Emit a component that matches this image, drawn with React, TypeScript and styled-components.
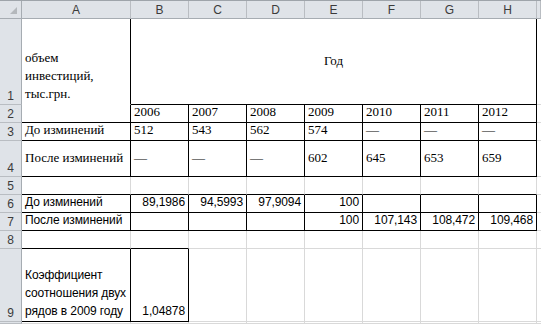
import React from 'react';
import styled, { createGlobalStyle } from 'styled-components';

const K = '#000000'
const G = '#d9d9d9'
const N = '#ffffff'

type CellData = {
  text?: string
  r: string
  b: string
  span?: number
  align?: 'left' | 'right' | 'center'
  valign?: 'end' | 'center'
  font?: 'serif' | 'sans'
}

const COLS = ['A', 'B', 'C', 'D', 'E', 'F', 'G', 'H', '']
const YEARS = ['2006', '2007', '2008', '2009', '2010', '2011', '2012']

const blank = (r: string, b: string, n = 1): CellData[] => Array.from({ length: n }, () => ({ r, b }))

const serif = (text: string, valign: 'end' | 'center' = 'end'): CellData => ({ text, r: K, b: K, font: 'serif', valign })
const num = (text: string): CellData => ({ text, r: K, b: K, font: 'sans', align: 'right' })

const ROWS: CellData[][] = [
  [
    { text: 'объем\nинвестиций,\nтыс.грн.', r: K, b: N, font: 'serif' },
    { text: 'Год', r: K, b: K, span: 7, font: 'serif', align: 'center', valign: 'center' },
    { r: G, b: G },
  ],
  [{ r: K, b: K }, ...YEARS.map(y => serif(y)), { r: G, b: G }],
  [
    serif('До изминений'),
    ...['512', '543', '562', '574', '—', '—', '—'].map(v => serif(v)),
    { r: G, b: G },
  ],
  [
    serif('После изминений', 'center'),
    ...['—', '—', '—', '602', '645', '653', '659'].map(v => serif(v, 'center')),
    { r: G, b: G },
  ],
  [...blank(G, K, 8), { r: G, b: G }],
  [
    { text: 'До изминений', r: K, b: K, font: 'sans' },
    ...['89,1986', '94,5993', '97,9094', '100', '', '', ''].map(num),
    { r: G, b: G },
  ],
  [
    { text: 'После изминений', r: K, b: K, font: 'sans' },
    ...['', '', '', '100', '107,143', '108,472', '109,468'].map(num),
    { r: G, b: G },
  ],
  [...blank(G, K, 2), ...blank(G, G, 7)],
  [
    { text: 'Коэффициент\nсоотношения двух\nрядов в 2009 году', r: K, b: K, font: 'sans' },
    num('1,04878'),
    ...blank(G, G, 7),
  ],
  blank(G, G, 9),
]

function App() {
  return (
    <>
      <GlobalStyle />
      <Sheet>
        <Corner>
          <Triangle />
        </Corner>
        {COLS.map((c, i) => (
          <ColHead key={'h' + i}>{c}</ColHead>
        ))}
        {ROWS.map((row, ri) => (
          <React.Fragment key={ri}>
            {/* the last row is only a sliver at the bottom edge, its number is not visible */}
            <RowHead>{ri < ROWS.length - 1 ? ri + 1 : ''}</RowHead>
            {row.map((cell, ci) => (
              <Cell
                key={ci}
                $r={cell.r}
                $b={cell.b}
                $span={cell.span || 1}
                $align={cell.align || 'left'}
                $valign={cell.valign || 'end'}
                $font={cell.font || 'sans'}
              >
                {cell.text}
              </Cell>
            ))}
          </React.Fragment>
        ))}
      </Sheet>
    </>
  )
}


const GlobalStyle = createGlobalStyle`
  html, body {
    margin: 0;
    padding: 0;
    background: #ffffff;
    overflow: hidden;
  }
`


const Sheet = styled.div`
  display: grid;
  grid-template-columns: 22px 109px repeat(7, 58px) minmax(0, 1fr);
  grid-template-rows: 18px 86px 18px 18px 36px 18px 18px 18px 18px 73px minmax(0, 1fr);
  width: 541px;
  height: 324px;
  box-sizing: border-box;
  overflow: hidden;
  border-top: 1px solid #9ea4aa;
  background: #ffffff;
`


const HeadBase = styled.div`
  box-sizing: border-box;
  background: #dfe3e8;
  color: #3b3b3b;
  font-family: 'Liberation Sans', Arial, sans-serif;
  font-size: 12px;
  display: flex;
  overflow: hidden;
  border-right: 1px solid #b9bdc2;
  border-bottom: 1px solid #b9bdc2;
`


const Corner = styled(HeadBase)`
  position: relative;
  border-bottom-color: #a6acb2;
  border-right-color: #a6acb2;
`


const Triangle = styled.span`
  position: absolute;
  right: 4px;
  bottom: 4px;
  width: 0;
  height: 0;
  border-left: 7px solid transparent;
  border-bottom: 7px solid #b4b8bc;
`


const ColHead = styled(HeadBase)`
  align-items: center;
  justify-content: center;
  border-bottom-color: #a6acb2;
`


const RowHead = styled(HeadBase)`
  align-items: flex-end;
  justify-content: center;
  padding-bottom: 1px;
  border-right-color: #a6acb2;
`


const Cell = styled.div<{
  $r: string
  $b: string
  $span: number
  $align: string
  $valign: string
  $font: string
}>`
  box-sizing: border-box;
  grid-column: span ${p => p.$span};
  display: flex;
  flex-direction: column;
  justify-content: ${p => (p.$valign === 'center' ? 'center' : 'flex-end')};
  text-align: ${p => p.$align};
  padding: 0 3px 1px 3px;
  border-right: 1px solid ${p => p.$r};
  border-bottom: 1px solid ${p => p.$b};
  white-space: pre;
  overflow: hidden;
  color: #000000;
  font-family: ${p =>
    p.$font === 'serif'
      ? "'Liberation Serif', 'Times New Roman', serif"
      : "'Liberation Sans', Arial, sans-serif"};
  font-size: ${p => (p.$font === 'serif' ? '13px' : '12px')};
  letter-spacing: ${p => (p.$font === 'serif' ? '0' : '-0.1px')};
  line-height: 18px;
`


export default App
